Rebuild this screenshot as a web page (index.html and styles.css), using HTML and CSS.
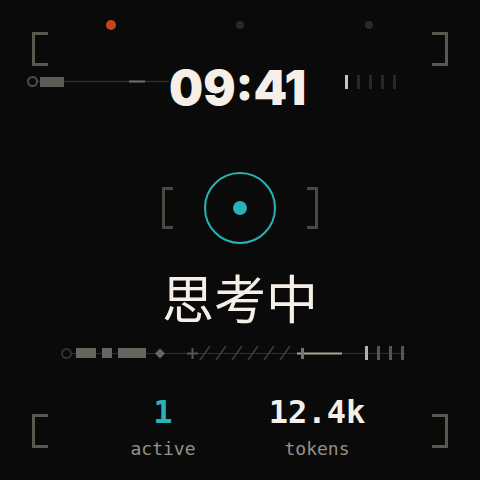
FILE: index.html
```html
<!DOCTYPE html>
<html lang="zh">
<head>
  <meta charset="UTF-8" />
  <meta name="viewport" content="width=device-width, initial-scale=1.0"/>
  <title>思考中</title>
  <link rel="stylesheet" href="styles.css">
</head>
<body>
  <div class="screen">
    <span class="corner tl"></span>
    <span class="corner tr"></span>
    <span class="corner bl"></span>
    <span class="corner br"></span>

    <div class="dots">
      <span class="dot live"></span>
      <span class="dot"></span>
      <span class="dot"></span>
    </div>

    <div class="header">
      <svg class="rail" width="169" height="20" viewBox="0 0 169 20">
        <line x1="38" y1="10.5" x2="169" y2="10.5" stroke="#2e2e2c" stroke-width="1.5"/>
        <circle cx="32.5" cy="10.5" r="4.5" fill="none" stroke="#4e4e4a" stroke-width="2"/>
        <rect x="40" y="6" width="24" height="10" fill="#5c5c56"/>
        <line x1="129" y1="10.5" x2="145" y2="10.5" stroke="#6e6e68" stroke-width="2"/>
      </svg>
      <div class="time">09:41</div>
      <svg class="ticks" width="52" height="20" viewBox="0 0 52 20">
        <rect x="0" y="4" width="3" height="14" fill="#c9c5bd"/>
        <rect x="12" y="4" width="3" height="14" fill="#232828"/>
        <rect x="24" y="4" width="3" height="14" fill="#232828"/>
        <rect x="36" y="4" width="3" height="14" fill="#232828"/>
        <rect x="48" y="4" width="3" height="14" fill="#232828"/>
      </svg>
    </div>

    <div class="target">
      <span class="bracket left"></span>
      <div class="ring"><span class="core"></span></div>
      <span class="bracket right"></span>
    </div>

    <div class="status">思考中</div>

    <svg class="strip" width="480" height="20" viewBox="0 0 480 20">
      <line x1="66" y1="10.5" x2="405" y2="10.5" stroke="#2f2f2c" stroke-width="1"/>
      <circle cx="66.5" cy="10.5" r="4.5" fill="#0a0a0a" stroke="#333330" stroke-width="2"/>
      <rect x="76" y="5" width="20" height="10" fill="#66665e"/>
      <rect x="102" y="5" width="10" height="10" fill="#66665e"/>
      <rect x="118" y="5" width="28" height="10" fill="#66665e"/>
      <polygon points="160,5.5 165,10.5 160,15.5 155,10.5" fill="#66665e"/>
      <line x1="187" y1="10.5" x2="198" y2="10.5" stroke="#55554f" stroke-width="2"/>
      <line x1="192.5" y1="5" x2="192.5" y2="16" stroke="#55554f" stroke-width="2"/>
      <g stroke="#3a3a36" stroke-width="1.8">
        <line x1="200" y1="17" x2="210" y2="3"/>
        <line x1="216" y1="17" x2="226" y2="3"/>
        <line x1="232" y1="17" x2="242" y2="3"/>
        <line x1="248" y1="17" x2="258" y2="3"/>
        <line x1="264" y1="17" x2="274" y2="3"/>
        <line x1="280" y1="17" x2="290" y2="3"/>
      </g>
      <line x1="297" y1="10.5" x2="342" y2="10.5" stroke="#a9a598" stroke-width="2"/>
      <line x1="302.5" y1="5" x2="302.5" y2="16" stroke="#77736a" stroke-width="3"/>
      <rect x="365" y="3" width="3" height="14" fill="#b5b1a5"/>
      <rect x="377" y="3" width="3" height="14" fill="#58564e"/>
      <rect x="389" y="3" width="3" height="14" fill="#58564e"/>
      <rect x="401" y="3" width="3" height="14" fill="#58564e"/>
    </svg>

    <div class="stats">
      <div class="stat">
        <div class="num accent">1</div>
        <div class="label">active</div>
      </div>
      <div class="stat">
        <div class="num">12.4k</div>
        <div class="label">tokens</div>
      </div>
    </div>
  </div>
</body>
</html>
```

FILE: styles.css
```css
body {
  margin: 0;
  background: #0a0a0a;
  font-family: 'Inter', 'Noto Sans CJK SC', sans-serif;
  color: #f5efe8;
}

.screen {
  position: relative;
  width: 480px;
  height: 480px;
  display: flex;
  flex-direction: column;
  align-items: center;
  overflow: hidden;
}

/* corner frame */
.corner {
  position: absolute;
  width: 16px;
  height: 34px;
  box-sizing: border-box;
  border: 3px solid #58584e;
}

.corner.tl { top: 32px; left: 32px; border-right: none; }
.corner.tr { top: 32px; left: 432px; border-left: none; }
.corner.bl { top: 414px; left: 32px; border-right: none; }
.corner.br { top: 414px; left: 432px; border-left: none; }

.dots {
  display: grid;
  grid-template-columns: repeat(3, 129px);
  justify-items: center;
  align-items: center;
  height: 10px;
  margin-top: 20px;
}

.dot {
  width: 8px;
  height: 8px;
  border-radius: 50%;
  background: #2a2a25;
}

.dot.live {
  width: 10px;
  height: 10px;
  background: #c5461e;
}

.header {
  width: 480px;
  height: 40px;
  margin-top: 31px;
  display: flex;
  align-items: center;
}

.rail, .ticks, .strip {
  display: block;
  flex: none;
}

.time {
  flex: none;
  width: 134px;
  margin-top: 14px;
  text-align: center;
  font-size: 48px;
  line-height: 48px;
  font-weight: 900;
  color: #f5efe8;
}

.ticks {
  margin-left: 42px;
}

.target {
  display: flex;
  align-items: center;
  gap: 31px;
  margin-top: 71px;
}

.bracket {
  width: 11px;
  height: 42px;
  box-sizing: border-box;
  border: 3px solid #4a4840;
}

.bracket.left { border-right: none; }
.bracket.right { border-left: none; }

.ring {
  width: 72px;
  height: 72px;
  box-sizing: border-box;
  border: 2px solid #2ab3b5;
  border-radius: 50%;
  display: flex;
  align-items: center;
  justify-content: center;
}

.core {
  width: 14px;
  height: 14px;
  border-radius: 50%;
  background: #2ab3b5;
}

.status {
  margin-top: 27px;
  font-family: 'Noto Sans CJK SC', sans-serif;
  font-size: 52px;
  line-height: 52px;
  color: #f5efe8;
}

.strip {
  margin-top: 20px;
}

.stats {
  display: grid;
  grid-template-columns: 154px 154px;
  margin-top: 33px;
  font-family: 'DejaVu Sans Mono', monospace;
  text-align: center;
}

.num {
  font-size: 32px;
  line-height: 32px;
  font-weight: bold;
  color: #f5efe8;
}

.num.accent {
  color: #2ab3b5;
}

.label {
  margin-top: 12px;
  font-size: 18px;
  line-height: 18px;
  color: #9a8f87;
}
```
